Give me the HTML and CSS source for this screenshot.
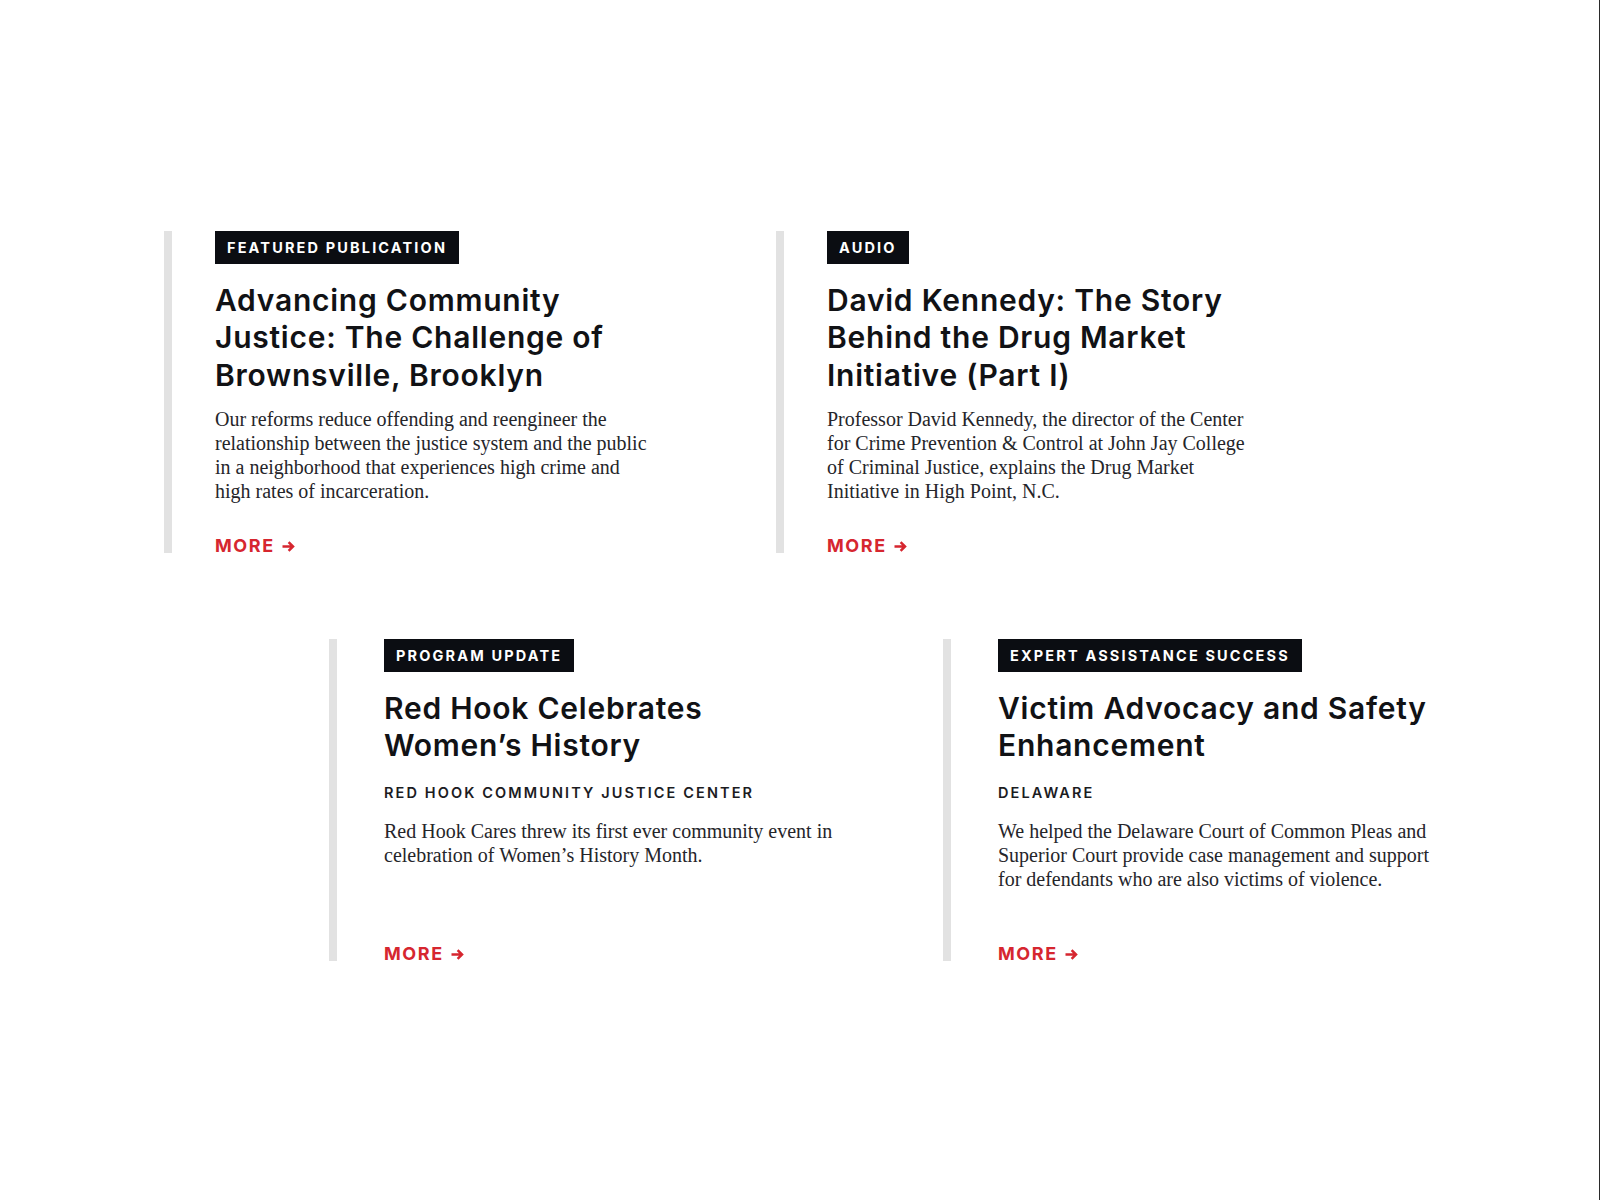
FILE: index.html
```html
<!DOCTYPE html>
<html lang="en">
<head>
<meta charset="utf-8">
<title>Featured</title>
<link rel="stylesheet" href="styles.css">
</head>
<body>
<div class="page">
  <div class="row row-first">
    <article class="card">
      <span class="tag">Featured Publication</span>
      <h2 class="title">Advancing Community<br>Justice: The Challenge of<br>Brownsville, Brooklyn</h2>
      <p class="body">Our reforms reduce offending and reengineer the<br>relationship between the justice system and the public<br>in a neighborhood that experiences high crime and<br>high rates of incarceration.</p>
      <a class="more" href="#">MORE <svg class="arrow" viewBox="0 0 13 11" width="13" height="11"><path d="M0.5 5.5H11M6.6 1.2L11 5.5L6.6 9.8" fill="none" stroke="currentColor" stroke-width="2.5" stroke-linecap="butt" stroke-linejoin="miter"/></svg></a>
    </article>
    <article class="card">
      <span class="tag">Audio</span>
      <h2 class="title">David Kennedy: The Story<br>Behind the Drug Market<br>Initiative (Part I)</h2>
      <p class="body">Professor David Kennedy, the director of the Center<br>for Crime Prevention &amp; Control at John Jay College<br>of Criminal Justice, explains the Drug Market<br>Initiative in High Point, N.C.</p>
      <a class="more" href="#">MORE <svg class="arrow" viewBox="0 0 13 11" width="13" height="11"><path d="M0.5 5.5H11M6.6 1.2L11 5.5L6.6 9.8" fill="none" stroke="currentColor" stroke-width="2.5" stroke-linecap="butt" stroke-linejoin="miter"/></svg></a>
    </article>
  </div>
  <div class="row row-second">
    <article class="card">
      <span class="tag">Program Update</span>
      <h2 class="title">Red Hook Celebrates<br>Women’s History</h2>
      <p class="sub">Red Hook Community Justice Center</p>
      <p class="body body-after-sub">Red Hook Cares threw its first ever community event in<br>celebration of Women’s History Month.</p>
      <a class="more" href="#">MORE <svg class="arrow" viewBox="0 0 13 11" width="13" height="11"><path d="M0.5 5.5H11M6.6 1.2L11 5.5L6.6 9.8" fill="none" stroke="currentColor" stroke-width="2.5" stroke-linecap="butt" stroke-linejoin="miter"/></svg></a>
    </article>
    <article class="card">
      <span class="tag">Expert Assistance Success</span>
      <h2 class="title">Victim Advocacy and Safety<br>Enhancement</h2>
      <p class="sub">Delaware</p>
      <p class="body body-after-sub">We helped the Delaware Court of Common Pleas and<br>Superior Court provide case management and support<br>for defendants who are also victims of violence.</p>
      <a class="more" href="#">MORE <svg class="arrow" viewBox="0 0 13 11" width="13" height="11"><path d="M0.5 5.5H11M6.6 1.2L11 5.5L6.6 9.8" fill="none" stroke="currentColor" stroke-width="2.5" stroke-linecap="butt" stroke-linejoin="miter"/></svg></a>
    </article>
  </div>
</div>
</body>
</html>
```

FILE: styles.css
```css
* { box-sizing: border-box; }
html, body { margin: 0; padding: 0; background: #ffffff; }
body { font-family: Inter, "Liberation Sans", sans-serif; color: #111; }

.page {
  width: 1600px;
  min-height: 1200px;
  border-right: 1px solid #2a2a2a;
  padding-top: 231px;
}

.row {
  display: flex;
  gap: 91px;
}
.row-first { padding-left: 164px; }
.row-second { padding-left: 329px; margin-top: 86px; }

.card {
  width: 521px;
  min-height: 322px;
  display: flex;
  flex-direction: column;
  align-items: flex-start;
  border-left: 8px solid #e2e2e2;
  padding-left: 43px;
}
.row-second .card {
  width: 523px;
  padding-left: 47px;
}

.tag {
  display: inline-block;
  height: 33px;
  line-height: 33px;
  padding: 0 12px;
  background: #0b0d12;
  color: #ffffff;
  font-family: Inter, "Liberation Sans", sans-serif;
  font-weight: 700;
  font-size: 14.5px;
  letter-spacing: 2.15px;
  text-transform: uppercase;
}

.title {
  margin: 18px 0 0;
  font-family: Inter, "Liberation Sans", sans-serif;
  font-weight: 600;
  font-size: 30px;
  line-height: 37.4px;
  color: #111215;
  letter-spacing: 0.75px;
  white-space: nowrap;
}

.sub {
  margin: 19px 0 0;
  font-family: Inter, "Liberation Sans", sans-serif;
  font-weight: 600;
  font-size: 14.5px;
  line-height: 18px;
  letter-spacing: 2.1px;
  text-transform: uppercase;
  color: #1c1c1f;
}

.body {
  margin: 13px 0 0;
  font-family: "Liberation Serif", "Times New Roman", serif;
  font-size: 20px;
  line-height: 24px;
  color: #25252a;
  white-space: nowrap;
}
.body-after-sub { margin-top: 17px; }

.more {
  margin-top: auto;
  padding-top: 35px;
  display: inline-flex;
  align-items: center;
  gap: 7px;
  font-family: Inter, "Liberation Sans", sans-serif;
  font-weight: 700;
  font-size: 18px;
  line-height: 14px;
  letter-spacing: 1.6px;
  color: #d6262f;
  text-decoration: none;
}
.arrow { display: block; }
```
